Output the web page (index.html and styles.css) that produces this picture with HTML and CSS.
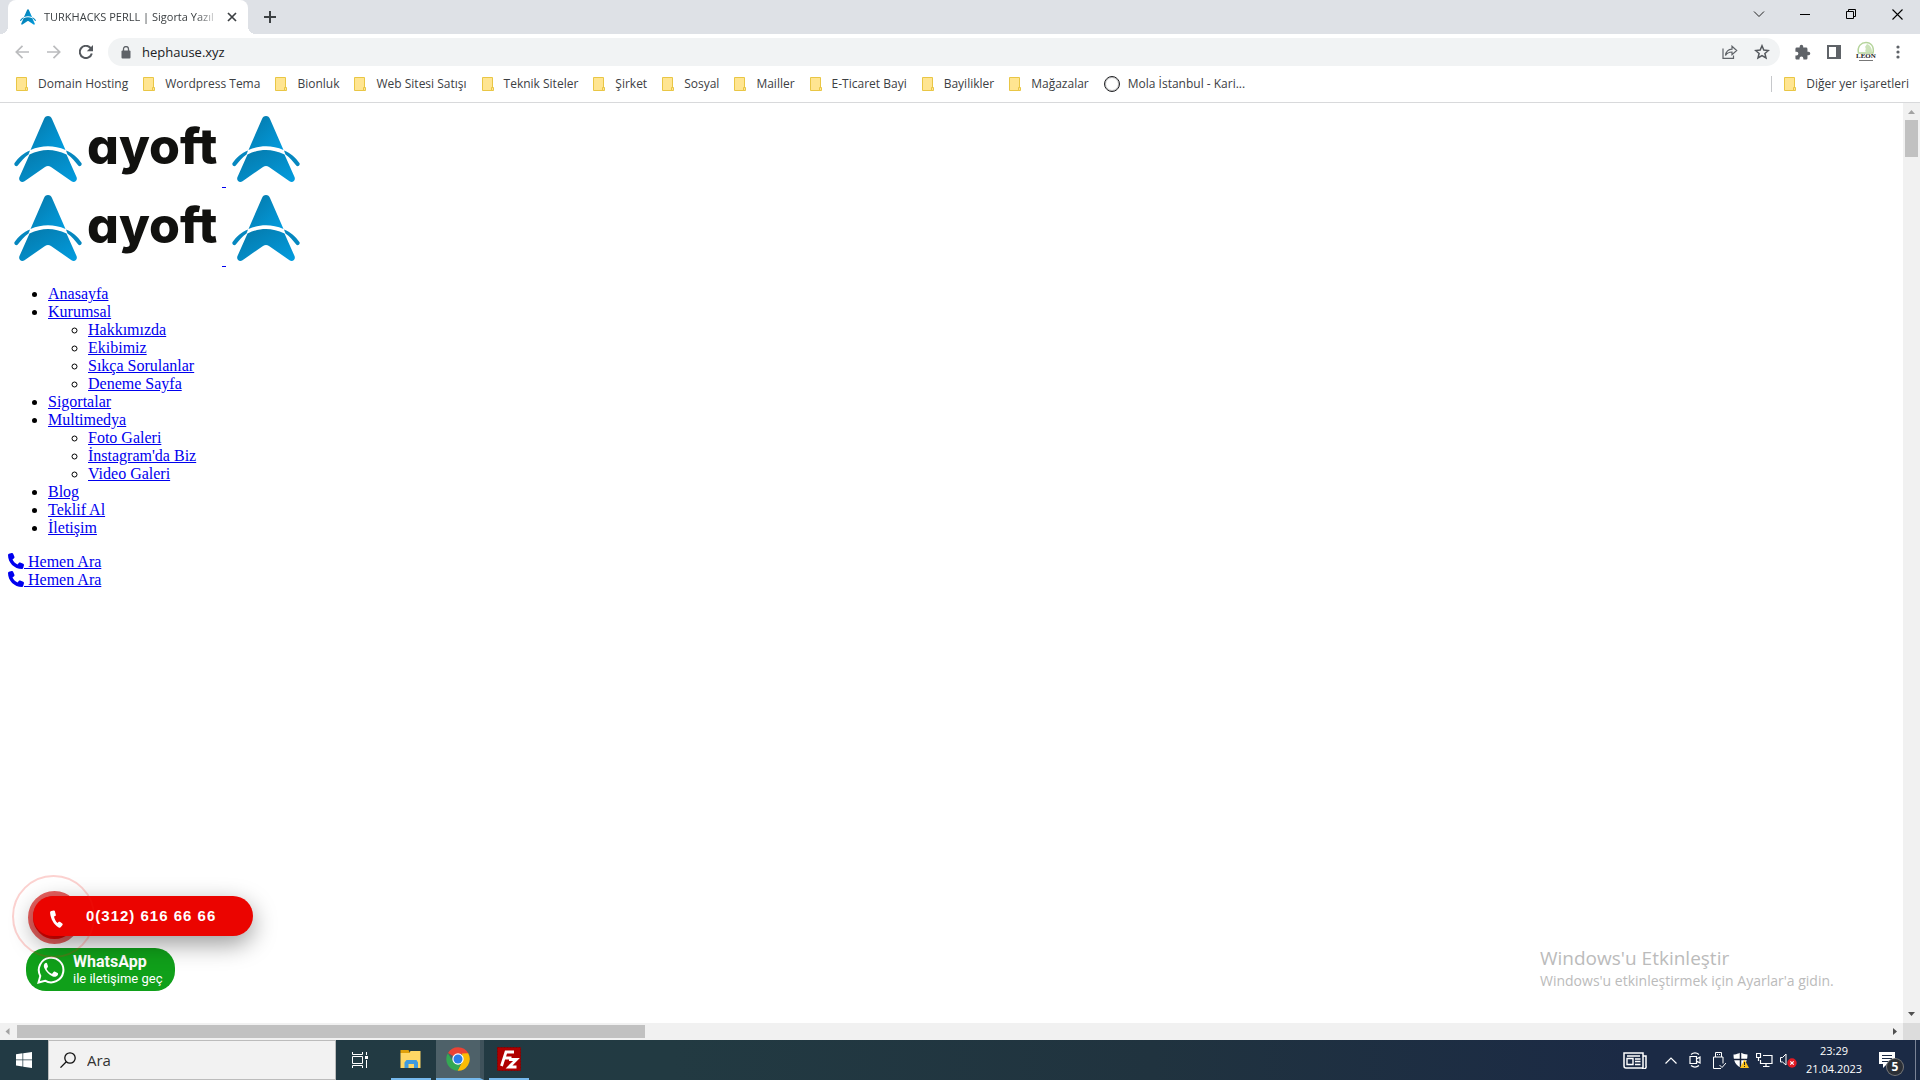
FILE: index.html
```html
<!DOCTYPE html>
<html lang="tr">
<head>
<meta charset="utf-8">
<title>TURKHACKS PERLL | Sigorta Yazıl</title>
<link rel="stylesheet" href="styles.css">
</head>
<body>
<svg class="defs" aria-hidden="true">
  <defs>
    <linearGradient id="blue" x1="0" y1="0" x2="1" y2="1">
      <stop offset="0.1" stop-color="#057bad"/>
      <stop offset="1" stop-color="#029de0"/>
    </linearGradient>
    <symbol id="mark" viewBox="0 0 68 66">
      <path fill="url(#blue)" d="M34 0c-2 0-3.300 1-4 3L16.500 34C28 29 40 29 51.500 34L38 3C37.300 1 36 0 34 0z"/>
      <path fill="url(#blue)" d="M15.500 38.500C28 32.500 40 32.500 52.500 38.500L62.500 61c1.500 3.500-2 6.200-5 4.200L37 51c-2-1.500-4-1.500-6 0L10.500 65.200c-3 2-6.500-.7-5-4.200z"/>
      <path fill="#0587bf" d="M16 34.500C9.500 37 4 42 .6 47c-1.200 2 1.400 4.400 3.200 2.600C7 45.500 10.500 41 14.500 38.500zM52 34.500C58.500 37 64 42 67.400 47c1.200 2-1.400 4.400-3.200 2.600C61 45.500 57.500 41 53.500 38.500z"/>
    </symbol>
    <symbol id="folder" viewBox="0 0 12 14">
      <path fill="#ffe591" stroke="#e9c645" d="M.5.500h10v13H.5z"/>
      <path fill="#ffe591" stroke="#e9c645" d="M9.500 10.500h2v3h-2z"/>
    </symbol>
    <symbol id="phone" viewBox="0 0 512 512">
      <path fill="currentColor" d="M164.900 24.600c-7.700-18.600-28-28.500-47.400-23.200l-88 24C12.100 30.200 0 46 0 64c0 247.400 200.600 448 448 448 18 0 33.800-12.100 38.600-29.500l24-88c5.300-19.400-4.600-39.700-23.200-47.400l-96-40c-16.300-6.800-35.200-2.100-46.300 11.600L304.700 368C234.300 334.700 177.300 277.700 144 207.300L193.300 167c13.700-11.200 18.400-30 11.600-46.300z"/>
    </symbol>
  </defs>
</svg>

<header class="chrome">
  <div class="tabstrip">
    <div class="tab">
      <svg class="favicon"><use href="#mark"/></svg>
      <span class="tab-title">TURKHACKS PERLL | Sigorta Yazıl</span>
      <button class="tab-close" aria-label="Sekmeyi kapat"><svg width="10" height="10" viewBox="0 0 10 10"><path d="M1 1l8 8M9 1l-8 8" stroke="#3c4043" stroke-width="1.700"/></svg></button>
    </div>
    <button class="new-tab" aria-label="Yeni sekme"><svg width="12" height="12" viewBox="0 0 12 12"><path d="M6 0v12M0 6h12" stroke="#3c4043" stroke-width="2"/></svg></button>
    <div class="window-buttons">
      <button aria-label="Sekme ara"><svg width="12" height="12" viewBox="0 0 12 12"><path d="M1 3.500l5 5 5-5" fill="none" stroke="#222"/></svg></button>
      <button aria-label="Küçült"><svg width="10" height="11" viewBox="0 0 10 11"><path d="M0 5.500h10" stroke="#000"/></svg></button>
      <button aria-label="Geri yükle"><svg width="11" height="11" viewBox="0 0 11 11"><path d="M.5 2.500h7v7h-7zM2.500 2.500v-2h7v7h-2" fill="none" stroke="#000"/></svg></button>
      <button aria-label="Kapat"><svg width="11" height="11" viewBox="0 0 11 11"><path d="M.5.500l10 10M10.500.500l-10 10" stroke="#000" stroke-width="1.100"/></svg></button>
    </div>
  </div>

  <div class="toolbar">
    <button class="tool" aria-label="Geri"><svg width="14" height="14" viewBox="0 0 14 14"><path d="M14 7H1.500M7.500 .8L1.300 7l6.200 6.200" fill="none" stroke="#bbbcbe" stroke-width="1.700"/></svg></button>
    <button class="tool" aria-label="İleri"><svg width="14" height="14" viewBox="0 0 14 14"><path d="M0 7h12.500M6.500 .8L12.700 7l-6.200 6.200" fill="none" stroke="#bbbcbe" stroke-width="1.700"/></svg></button>
    <button class="tool" aria-label="Yenile"><svg width="14" height="14" viewBox="0 0 14 14"><path d="M12.800 8.500A6.100 6.100 0 1 1 11.300 2.700L12.500 4" fill="none" stroke="#54585d" stroke-width="2"/><path d="M14 0v6.200H7.800z" fill="#54585d"/></svg></button>
    <div class="omnibox">
      <svg class="lock" width="10" height="13" viewBox="0 0 10 13"><path d="M2.500 5V3a2.500 2.500 0 0 1 5 0v2" fill="none" stroke="#5f6368" stroke-width="1.300"/><rect x="0.500" y="4.500" width="9" height="8" rx="1" fill="#5f6368"/></svg>
      <input class="address" type="text" aria-label="Adres" value="hephause.xyz">
      <button class="tool" aria-label="Paylaş"><svg width="16" height="14" viewBox="0 0 16 14"><path d="M1 3.500v9.900h10.500V10.500M3.500 10.500C4 6.500 6.500 4.300 10 4.100V1.200l4.700 4.300L10 9.700V7C7 7 5 8.200 3.500 10.500z" fill="none" stroke="#5f6368" stroke-width="1.200"/></svg></button>
      <button class="tool" aria-label="Yer işareti"><svg width="16" height="16" viewBox="0 0 16 16"><path d="M8 1.800l1.800 4.300 4.600.4-3.500 3 1.100 4.500L8 11.600 4 14l1.100-4.500-3.500-3 4.600-.4z" fill="none" stroke="#54585d" stroke-width="1.500"/></svg></button>
    </div>
    <button class="tool" aria-label="Uzantılar"><svg width="17" height="17" viewBox="0 0 24 24"><path fill="#5f6368" d="M20.500 11H19V7a2 2 0 0 0-2-2h-4V3.500a2.500 2.500 0 0 0-5 0V5H4a2 2 0 0 0-2 2v3.800h1.500a2.700 2.700 0 0 1 0 5.400H2V20c0 1.100.9 2 2 2h3.800v-1.500a2.700 2.700 0 0 1 5.400 0V22H17a2 2 0 0 0 2-2v-4h1.500a2.500 2.500 0 0 0 0-5z"/></svg></button>
    <button class="tool" aria-label="Yan panel"><svg width="14" height="14" viewBox="0 0 14 14"><path fill="#5f6368" fill-rule="evenodd" d="M0 0h14v14H0zM2 2v10h7V2z"/></svg></button>
    <button class="tool" aria-label="Profil"><svg width="22" height="22" viewBox="0 0 22 22"><circle cx="11" cy="11" r="11" fill="#fff"/><path d="M3.500 12C2 5 6.500 1.500 11 1.500S19.500 5 18 12z" fill="none" stroke="#b5d49b" stroke-width="1.500"/><path d="M12 3c3 1 5 4 5 8h-6c-2-1 1-3-1-5z" fill="#cbe2b8"/><text x="1" y="17" class="avatar-text">LEON</text><path d="M4 19.500h14" stroke="#777"/></svg></button>
    <button class="tool" aria-label="Menü"><svg width="4" height="14" viewBox="0 0 4 14"><g fill="#5f6368"><circle cx="2" cy="2" r="1.600"/><circle cx="2" cy="7" r="1.600"/><circle cx="2" cy="12" r="1.600"/></g></svg></button>
  </div>

  <nav class="bookmarks">
    <a href="#"><svg class="folder"><use href="#folder"/></svg>Domain Hosting</a>
    <a href="#"><svg class="folder"><use href="#folder"/></svg>Wordpress Tema</a>
    <a href="#"><svg class="folder"><use href="#folder"/></svg>Bionluk</a>
    <a href="#"><svg class="folder"><use href="#folder"/></svg>Web Sitesi Satışı</a>
    <a href="#"><svg class="folder"><use href="#folder"/></svg>Teknik Siteler</a>
    <a href="#"><svg class="folder"><use href="#folder"/></svg>Şirket</a>
    <a href="#"><svg class="folder"><use href="#folder"/></svg>Sosyal</a>
    <a href="#"><svg class="folder"><use href="#folder"/></svg>Mailler</a>
    <a href="#"><svg class="folder"><use href="#folder"/></svg>E-Ticaret Bayi</a>
    <a href="#"><svg class="folder"><use href="#folder"/></svg>Bayilikler</a>
    <a href="#"><svg class="folder"><use href="#folder"/></svg>Mağazalar</a>
    <a href="#" class="site"><span class="ring"></span>Mola İstanbul - Kari...</a>
    <a href="#" class="other"><svg class="folder"><use href="#folder"/></svg>Diğer yer işaretleri</a>
  </nav>
</header>

<div class="viewport">
  <main class="page">
    <div><a href="#"><svg class="logo-wide" viewBox="0 0 214 75"><use href="#mark" x="6" y="5" width="68" height="66"/><text x="79" y="53" class="logo-text">ayoft</text></svg> <svg class="logo-small" viewBox="0 0 80 75"><use href="#mark" x="6" y="5" width="68" height="66"/></svg></a></div>
    <div><a href="#"><svg class="logo-wide" viewBox="0 0 214 75"><use href="#mark" x="6" y="5" width="68" height="66"/><text x="79" y="53" class="logo-text">ayoft</text></svg> <svg class="logo-small" viewBox="0 0 80 75"><use href="#mark" x="6" y="5" width="68" height="66"/></svg></a></div>
    <ul>
      <li><a href="#">Anasayfa</a></li>
      <li><a href="#">Kurumsal</a>
        <ul>
          <li><a href="#">Hakkımızda</a></li>
          <li><a href="#">Ekibimiz</a></li>
          <li><a href="#">Sıkça Sorulanlar</a></li>
          <li><a href="#">Deneme Sayfa</a></li>
        </ul>
      </li>
      <li><a href="#">Sigortalar</a></li>
      <li><a href="#">Multimedya</a>
        <ul>
          <li><a href="#">Foto Galeri</a></li>
          <li><a href="#">İnstagram'da Biz</a></li>
          <li><a href="#">Video Galeri</a></li>
        </ul>
      </li>
      <li><a href="#">Blog</a></li>
      <li><a href="#">Teklif Al</a></li>
      <li><a href="#">İletişim</a></li>
    </ul>
    <div><a href="#"><svg class="call-icon"><use href="#phone"/></svg> Hemen Ara</a></div>
    <div><a href="#"><svg class="call-icon"><use href="#phone"/></svg> Hemen Ara</a></div>
  </main>

  <div class="floating">
    <a href="#" class="whatsapp">
      <svg width="28" height="28" viewBox="0 0 28 28"><path d="M1.500 26.500l1.800-6.600A12.300 12.300 0 1 1 8 24.700z" fill="none" stroke="#fff" stroke-width="2"/><path fill="#fff" d="M10 7.300c-.5-.9-1.400-.6-2 0-1.300 1.300-1.500 3-.7 4.800 1.800 4 4.600 6.800 8.500 8.300 2 .8 4 .2 5-1.400.4-.8.400-1.700-.2-2l-2.900-1.400c-.6-.2-1 0-1.400.6l-.9 1.200c-.3.300-.7.400-1.200.1-2-.9-3.400-2.200-4.500-4.200-.2-.4 0-.8.300-1.100l.8-1.100c.2-.3.200-.7.100-1z"/></svg>
      <span class="whatsapp-text"><b>WhatsApp</b><span>ile iletişime geç</span></span>
    </a>
    <a href="#" class="call">
      <span class="pulse"></span><span class="halo"></span>
      <span class="call-body">
        <svg width="13" height="18" viewBox="0 0 13 18"><path fill="#fff" d="M3.800.5L1.300 1C.4 1.200 0 2 .1 3c.6 6 3.600 11.500 8.600 14.400.8.500 1.700.3 2.200-.4l1.600-2.100c.4-.6.300-1.100-.2-1.500l-2.400-1.600c-.5-.3-1-.2-1.400.2l-1 1C5.600 11.400 4.500 9 4 6.500l1.300-.6c.5-.3.700-.7.500-1.200L4.900 1.200c-.1-.5-.6-.8-1.100-.7z"/></svg>
        <span>0(312) 616 66 66</span>
      </span>
    </a>
  </div>

  <aside class="watermark">
    <p class="watermark-title">Windows'u Etkinleştir</p>
    <p>Windows'u etkinleştirmek için Ayarlar'a gidin.</p>
  </aside>

  <div class="scroll-v">
    <svg viewBox="0 0 17 17"><path d="M5 11h7L8.500 7z" fill="#a3a3a3"/></svg>
    <div class="thumb"></div>
    <svg viewBox="0 0 17 17"><path d="M5 6h7l-3.500 4z" fill="#505050"/></svg>
  </div>
  <div class="scroll-h">
    <svg viewBox="0 0 17 17"><path d="M9.500 5v7L5.500 8.500z" fill="#a3a3a3"/></svg>
    <div class="thumb"></div>
    <svg viewBox="0 0 17 17"><path d="M7 5v7l4-3.500z" fill="#505050"/></svg>
  </div>
  <div class="corner"></div>
</div>

<footer class="taskbar">
  <button class="start" aria-label="Başlat"><svg width="16" height="16" viewBox="0 0 16 16"><path fill="#fff" d="M0 2.200L6.500 1.300v6.200H0zM7.200 1.200L16 0v7.500H7.200zM0 8.200h6.500v6.300L0 13.600zM7.200 8.200H16V16l-8.800-1.300z"/></svg></button>
  <label class="search">
    <svg width="16" height="16" viewBox="0 0 16 16"><circle cx="10" cy="6" r="5.200" fill="none" stroke="#111" stroke-width="1.300"/><path d="M6.300 9.800L.5 15.600" stroke="#111" stroke-width="1.300"/></svg>
    <input type="text" placeholder="Ara" aria-label="Ara">
  </label>
  <button class="taskview" aria-label="Görev görünümü"><svg width="16" height="16" viewBox="0 0 16 16"><path d="M.5 0v2.500h10V0M.5 16v-2.500h10V16M.5 4.500h10v7h-10zM14.500 0v3M14.500 8v8" fill="none" stroke="#fff"/><path d="M13 4h3v3h-3z" fill="#fff"/></svg></button>
  <button class="app" aria-label="Dosya Gezgini"><svg width="22" height="18" viewBox="0 0 21 18"><path fill="#e0a10b" d="M0 0h8l1.500 3H0z"/><path fill="#ffd765" d="M0 3h9l1-2h10v17H0z"/><path fill="#3f9be0" d="M4 18v-5.500L6 10h10l1.500 2.500V18h-4v-4H8v4z"/></svg></button>
  <button class="app active" aria-label="Google Chrome"><svg width="24" height="24" viewBox="0 0 24 24"><path fill="#ea4335" d="M12 12L2 6a11.700 11.700 0 0 1 20.300.200L22 7H12z"/><path fill="#fbbc05" d="M22.200 6.300A11.700 11.700 0 0 1 11.500 23.700L16.500 14.500 16 6.500z"/><path fill="#34a853" d="M1.800 6.200L7.500 15l8.500-.5-4.500 9.200A11.700 11.700 0 0 1 1.800 6.200z"/><circle cx="12" cy="12" r="5.700" fill="#fff"/><circle cx="12" cy="12" r="4.500" fill="#2b7de9"/></svg></button>
  <button class="app" aria-label="FileZilla"><svg width="24" height="24" viewBox="0 0 24 24"><path fill="#b00000" stroke="#8a0000" stroke-dasharray="2 1" d="M.5.500h23v23H.5z"/><path fill="none" stroke="#fff" stroke-width="2.800" d="M4.500 19L9 5h8M6.500 11h8M12 12.500h7.500L12 20h7.500"/></svg></button>

  <div class="tray">
    <svg class="news" width="24" height="17" viewBox="0 0 24 17"><path d="M1 1h19v15H3a2 2 0 0 1-2-2zM20 4h3v10a2 2 0 0 1-4 1.500" fill="none" stroke="#fff" stroke-width="1.500"/><path d="M4 6.500h6v6H4zM4 4h13M12 7h5.500M12 9.500h5.500M12 12.500h5.500" fill="none" stroke="#fff" stroke-width="1.400"/></svg>
    <svg class="spaced" width="12" height="7" viewBox="0 0 12 7"><path d="M.5 6.500L6 1l5.500 5.500" fill="none" stroke="#fff" stroke-width="1.200"/></svg>
    <svg class="spaced" width="12" height="16" viewBox="0 0 12 16"><path d="M1 4.500h6.500v7H1zM7.500 7L11 5v6L7.500 9M2 2.500Q6-.8 10 2.500M2 13.500q4 3.300 8 0" fill="none" stroke="#fff" stroke-width="1.200"/></svg>
    <svg width="13" height="17" viewBox="0 0 13 17"><path d="M2.500 5V.5h6V5M8 16.500H.5V5h9.500v6.500M4 2.500h1M6 2.500h1M6.500 13l2.500 2.500L13 11" fill="none" stroke="#fff"/></svg>
    <svg width="16" height="16" viewBox="0 0 16 16"><path d="M7.500.5Q11 2.500 14.500 2.500C14.500 9 12.500 13 7.500 15.500 2.500 13 .5 9 .5 2.500 4 2.500 7.500.5 7.500.5z" fill="#fff"/><path d="M7.500 0v16M0 7.500h15" stroke="#15203a" stroke-width="1.500"/><path d="M11.500 7.500L16 16H7z" fill="#fdc11b"/><path d="M11.500 10v3M11.500 14v1" stroke="#222"/></svg>
    <svg width="17" height="15" viewBox="0 0 17 15"><path d="M7 2.500h9v8H4.500V7M10 10.500v3M7 13.500h6.500M.5.500h4v4h-4zM2.500 4.500V8" fill="none" stroke="#fff" stroke-width="1.200"/></svg>
    <svg width="17" height="16" viewBox="0 0 17 16"><path d="M.5 5.500h2l3.500-3.500v11L2.500 10h-2z" fill="none" stroke="#fff"/><circle cx="12" cy="11" r="4.700" fill="#e01b24"/><path d="M10.300 9.300l3.400 3.400M13.700 9.300l-3.400 3.400" stroke="#fff" stroke-width="1.200"/></svg>
    <time class="clock"><span>23:29</span><span>21.04.2023</span></time>
  </div>
  <button class="notice" aria-label="Bildirimler"><svg width="16" height="16" viewBox="0 0 16 16"><path fill="#fff" d="M0 0h16v12H8l-4 4v-4H0z"/><path d="M3 3.500h10M3 6.500h10M3 9.500h6" stroke="#1b2a45"/></svg><span class="badge">5</span></button>
</footer>
</body>
</html>
```
FILE: styles.css
```css
* { box-sizing: border-box; }

html, body { height: 100%; }

body {
  margin: 0;
  display: flex;
  flex-direction: column;
  overflow: hidden;
  background: #fff;
  font: 12px/16px "Open Sans", "Noto Sans", sans-serif;
  color: #3c4043;
}

button, input { font: inherit; color: inherit; }

button {
  display: flex;
  align-items: center;
  justify-content: center;
  padding: 0;
  border: 0;
  background: none;
}

.defs { position: absolute; width: 0; height: 0; }

/* Browser frame */
.chrome { flex: none; border-bottom: 1px solid #d8d9db; }

.tabstrip {
  display: flex;
  align-items: flex-start;
  height: 34px;
  padding-left: 8px;
  background: #dee1e6;
}

.tab {
  position: relative;
  display: flex;
  align-items: center;
  width: 240px;
  height: 34px;
  padding: 0 10px 0 12px;
  border-radius: 8px 8px 0 0;
  background: #fff;
}

.tab::before, .tab::after {
  content: "";
  position: absolute;
  bottom: 0;
  width: 8px;
  height: 8px;
}
.tab::before { right: 100%; background: radial-gradient(circle at 0 0, transparent 8px, #fff 8px); }
.tab::after { left: 100%; background: radial-gradient(circle at 100% 0, transparent 8px, #fff 8px); }

.favicon { width: 16px; height: 16px; margin-right: 8px; }

.tab-title {
  flex: 1;
  white-space: nowrap;
  font-size: 11px;
  -webkit-mask-image: linear-gradient(to left, transparent, #000 24px);
  mask-image: linear-gradient(to left, transparent, #000 24px);
}

.tab-close { width: 12px; height: 16px; margin-left: 6px; }
.new-tab { width: 28px; height: 34px; margin-left: 8px; }

.window-buttons { display: flex; margin-left: auto; }
.window-buttons button { width: 46px; height: 28px; }

.toolbar {
  display: flex;
  align-items: center;
  height: 36px;
  padding: 0 6px;
}
.tool { flex: none; width: 32px; height: 28px; }

.omnibox {
  flex: 1;
  display: flex;
  align-items: center;
  height: 28px;
  margin: 0 6px;
  padding: 0 2px 0 13px;
  border-radius: 14px;
  background: #f1f3f4;
}
.address {
  flex: 1;
  min-width: 0;
  margin-left: 11px;
  padding: 0;
  border: 0;
  background: none;
  color: #202124;
  font-size: 13px;
}
.avatar-text { font: bold 7px "Liberation Serif", serif; fill: #222; }

.bookmarks {
  display: flex;
  align-items: center;
  gap: 15px;
  height: 32px;
  padding: 0 11px 4px 16px;
}
.bookmarks a {
  display: flex;
  align-items: center;
  gap: 10px;
  white-space: nowrap;
  color: inherit;
  text-decoration: none;
}
.folder { width: 12px; height: 14px; }
.bookmarks .site { gap: 8px; }
.ring { width: 16px; height: 16px; border: 1px solid #202124; border-radius: 50%; outline: 1px solid rgba(32, 33, 36, 0.3); outline-offset: -2px; }
.bookmarks .other { margin-left: auto; padding-left: 12px; border-left: 1px solid #c6c8cb; }

/* Page area with its scroll bars */
.viewport {
  position: relative;
  flex: 1;
  min-height: 0;
  display: grid;
  grid-template: minmax(0, 1fr) 17px / minmax(0, 1fr) 17px;
}

.page {
  overflow: hidden;
  padding: 8px;
  font: 16px/18px "Liberation Serif", serif;
  color: #000;
}
.page a { color: #00e; text-decoration: underline; }
.page ul { margin: 16px 0; padding-left: 40px; }
.page ul ul { margin: 0; }
.logo-wide { width: 214px; height: 75px; }
.logo-small { width: 80px; height: 75px; }
.logo-text { font: 800 50px Inter, sans-serif; font-feature-settings: "cv11"; fill: #11110f; }
.call-icon { width: 16px; height: 16px; vertical-align: -2px; }

.scroll-v, .scroll-h { display: flex; background: #f1f1f1; }
.scroll-v { grid-area: 1 / 2; flex-direction: column; }
.scroll-h { grid-area: 2 / 1; }
.scroll-v svg, .scroll-h svg { flex: none; width: 17px; height: 17px; }
.thumb { background: #c1c1c1; }
.scroll-v .thumb { height: 37px; margin: 0 2px auto; }
.scroll-h .thumb { width: 33%; margin: 2px auto 2px 0; }
.corner { grid-area: 2 / 2; background: #dcdcdc; }

.floating {
  position: absolute;
  left: 26px;
  bottom: 49px;
  display: flex;
  flex-direction: column-reverse;
  align-items: flex-start;
  gap: 12px;
}
.floating a { color: #fff; text-decoration: none; }

.call { position: relative; margin-left: 7px; }
.call-body {
  position: relative;
  display: flex;
  align-items: center;
  gap: 23px;
  width: 220px;
  height: 40px;
  padding-left: 17px;
  border-radius: 20px;
  background: #eb0400;
  box-shadow: 0 8px 25px rgba(0, 0, 0, 0.4);
  font: bold 15px/20px "Liberation Sans", sans-serif;
  letter-spacing: 1px;
}
.call-body svg { margin-top: 6px; }
.halo, .pulse { position: absolute; z-index: 1; border-radius: 50%; }
.halo {
  left: -5px;
  top: -5px;
  width: 53px;
  height: 53px;
  border: 5px solid #e8605e;
  background: #eb0400;
  z-index: 0;
}
.call-body { z-index: 0; }
.pulse { left: -21px; top: -21px; width: 83px; height: 83px; border: 2px solid rgba(240, 30, 20, 0.2); }

.whatsapp {
  display: flex;
  align-items: center;
  width: 149px;
  height: 43px;
  padding-left: 11px;
  gap: 8px;
  border-radius: 20px;
  background: #10a01a;
  font: 13px/17px Roboto, sans-serif;
}
.whatsapp-text { display: flex; flex-direction: column; white-space: nowrap; }
.whatsapp-text b { font-size: 16px; }

.watermark {
  position: absolute;
  right: 81px;
  bottom: 49px;
  width: 299px;
  color: #bbb;
  font-size: 14px;
  line-height: 20px;
  white-space: nowrap;
}
.watermark p { margin: 0; }
.watermark .watermark-title { font-size: 19px; line-height: 26px; }

/* Taskbar */
.taskbar {
  flex: none;
  display: flex;
  height: 40px;
  padding-right: 4px;
  background: linear-gradient(to right, #223a44, #223a42 35%, #20333f 60%, #1b2a45 85%);
  color: #fff;
}
.start { width: 48px; }
.search {
  display: flex;
  align-items: center;
  gap: 11px;
  width: 288px;
  padding-left: 11px;
  border: 1px solid #bcbcbc;
  background: #f2f2f2;
}
.search input {
  flex: 1;
  min-width: 0;
  padding: 0;
  border: 0;
  background: none;
  color: #333;
  font-size: 15px;
}
.search input::placeholder { color: #333; opacity: 1; }
.taskview { width: 48px; margin-right: 7px; }
.app {
  width: 40px;
  margin-right: 5px;
  border-bottom: 2px solid #76b9ed;
}
.app.active {
  width: 48px;
  border-right: 4px solid #3f525b;
  background: #4e6169;
}
.tray {
  display: flex;
  align-items: center;
  gap: 7px;
  margin-left: auto;
}
.news { margin-right: 11px; }
.spaced { margin-right: 5px; }
.clock {
  display: flex;
  flex-direction: column;
  width: 60px;
  line-height: 18px;
  text-align: center;
  font-size: 11px;
}
.notice {
  position: relative;
  width: 52px;
  padding-right: 5px;
  border-right: 1px solid #7a8396;
}
.badge {
  position: absolute;
  left: 23px;
  top: 19px;
  width: 16px;
  height: 16px;
  border-radius: 50%;
  background: #2b2f36;
  box-shadow: 0 0 0 1px #777;
  font-weight: bold;
  text-align: center;
}
```
